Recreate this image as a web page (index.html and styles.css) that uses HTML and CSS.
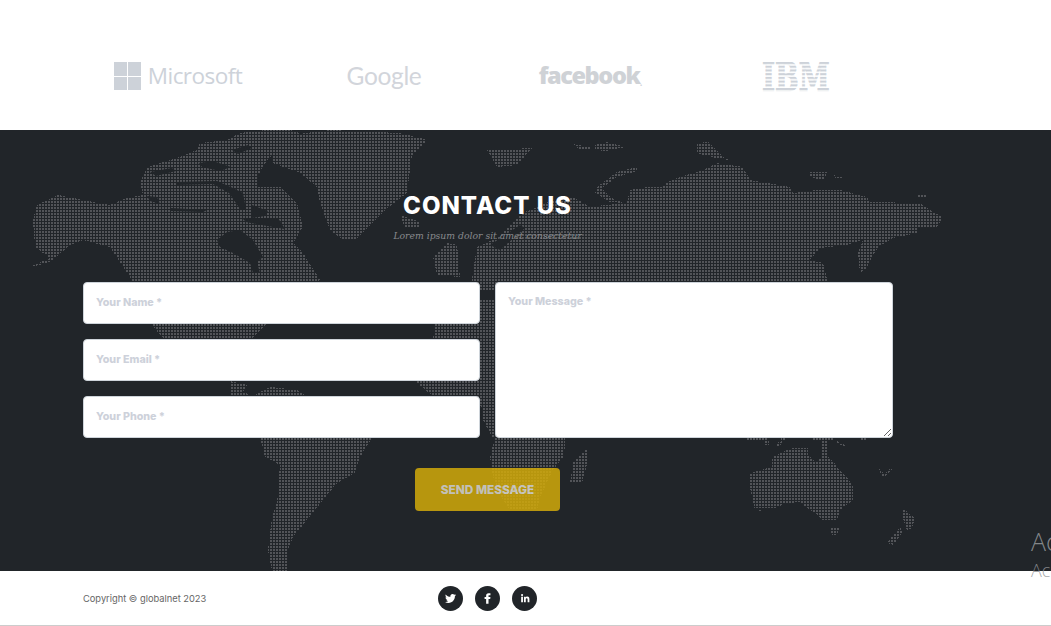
FILE: index.html
```html
<!DOCTYPE html>
<html lang="en">
<head>
<meta charset="utf-8">
<title>Contact</title>
<link rel="stylesheet" href="styles.css">
</head>
<body>
<section class="logos">
  <div class="logo logo-ms">
    <span class="ms-grid"><i></i><i></i><i></i><i></i></span>
    <span class="ms-word">Microsoft</span>
  </div>
  <div class="logo logo-google">Google</div>
  <div class="logo logo-fb">facebook<small>.</small></div>
  <div class="logo">
    <svg class="ibm" width="68" height="29" viewBox="0 0 68 29">
      <defs>
        <pattern id="stripes" patternUnits="userSpaceOnUse" width="68" height="3.72">
          <rect width="68" height="2.1" fill="#cdd2d9"/>
        </pattern>
      </defs>
      <text class="ibm-text" transform="scale(0.7 1)" x="0" y="29" fill="url(#stripes)" stroke="url(#stripes)">IBM</text>
    </svg>
  </div>
</section>

<section class="contact">
  <svg class="map" width="1051" height="441" viewBox="0 130 1051 441" aria-hidden="true">
    <defs>
      <pattern id="dots" patternUnits="userSpaceOnUse" width="3" height="3">
        <rect width="2" height="2" fill="#525458"/>
      </pattern>
    </defs>
    <g fill="url(#dots)" shape-rendering="crispEdges">
      <!-- North America -->
      <polygon points="28,268 50,258 35,247 33,220 37,205 58,195 83,200 110,205 127,198 143,195 140,183 147,167 177,158 197,150 200,143 227,140 240,133 267,130 290,130 300,133 267,160 257,177 258,187 280,187 297,203 303,227 293,243 303,253 320,280 270,320 253,338 163,338 152,325 133,282 130,277 110,247 83,240 70,245 50,262"/>
      <!-- Greenland -->
      <polygon points="273,148 290,135 330,130 400,133 428,140 412,155 410,170 407,193 385,210 355,240 343,240 330,230 320,203 317,187 300,173 273,163"/>
      <!-- Central America -->
      <polygon points="230,381 247,385 243,392 253,396 270,387 297,390 307,396 290,398 230,398"/>
      <!-- South America -->
      <polygon points="258,430 372,430 372,438 360,457 355,473 337,483 315,510 293,537 287,553 288,571 272,571 268,550 272,517 277,503 280,465 265,457"/>
      <!-- Iceland, Britain, Ireland -->
      <polygon points="487,150 532,148 517,165 497,167"/>
      <polygon points="400,215 420,222 420,228 405,228"/>
      <polygon points="433,257 447,243 457,245 460,277 437,275"/>
      <!-- Eurasia -->
      <polygon points="470,290 477,247 497,238 523,213 553,200 575,198 590,207 605,205 627,203 630,190 647,187 663,187 667,182 680,177 703,170 717,163 743,167 750,180 790,187 793,193 817,190 840,190 867,197 870,202 920,203 943,218 937,227 918,227 917,233 893,238 878,247 865,270 860,273 858,253 863,240 847,245 820,248 810,260 823,263 830,290"/>
      <!-- Arctic islands -->
      <polygon points="637,167 617,172 597,187 595,193 610,202 623,203 610,197 602,188 617,177 637,171"/>
      <polygon points="573,144 590,147 590,150 580,150"/>
      <polygon points="595,145 607,142 625,147 607,151 595,150"/>
      <polygon points="697,143 708,142 723,157 730,160 715,158 697,153"/>
      <polygon points="810,172 828,172 823,180 810,177"/>
      <polygon points="833,175 845,178 835,178"/>
      <polygon points="917,195 927,195 927,198 917,198"/>
      <!-- Africa -->
      <polygon points="440,300 560,300 565,448 563,457 553,470 540,497 537,510 510,510 503,500 493,477 490,457 495,438 492,437 483,420 483,407 433,396 417,383 420,370 433,338"/>
      <polygon points="587,448 573,463 570,483 582,483 588,460"/>
      <!-- Indonesia fragments -->
      <polygon points="746,437 767,437 767,440 746,440"/>
      <polygon points="765,441 769,441 769,445 765,445"/>
      <polygon points="775,444 782,441 782,444 778,446"/>
      <polygon points="781,437 786,437 786,440 781,440"/>
      <polygon points="813,437 834,437 834,440 813,440"/>
      <polygon points="821,440 827,440 827,450 821,450"/>
      <polygon points="835,440 845,445 845,446 838,444"/>
      <polygon points="860,437 866,437 866,440 860,440"/>
      <!-- Australia -->
      <polygon points="750,473 772,467 772,458 780,453 793,448 808,448 808,455 815,462 822,458 822,447 827,447 828,457 835,463 837,468 847,477 853,487 853,500 840,510 837,520 822,520 815,513 807,508 800,502 787,503 775,508 755,508 763,511 755,510 752,497 750,487"/>
      <polygon points="830,527 840,527 837,535 832,535"/>
      <!-- New Zealand and Pacific -->
      <polygon points="902,508 915,518 912,528 907,530 903,518"/>
      <polygon points="900,527 903,532 893,545 887,543"/>
      <polygon points="878,468 885,474 891,467 892,470 885,476 882,476"/>
    </g>
    <g class="water">
      <polygon points="217,240 227,232 240,230 253,240 263,257 257,262 260,273 253,273 250,263 233,253 220,247"/>
      <polygon points="252,205 268,211 265,216 252,218"/>
      <polygon points="243,219 278,218 285,229 267,226 246,222"/>
      <polygon points="170,208 207,210 203,212 170,211"/>
      <polygon points="175,182 217,181 233,188 243,193 246,209 240,209 229,193 213,184 177,185"/>
      <polygon points="199,163 213,161 231,167 220,171 202,167"/>
      <polygon points="147,196 157,197 160,204 150,201"/>
      <polygon points="150,172 172,168 176,171 156,176"/>
      <polygon points="232,150 248,145 252,148 238,154"/>
      <polygon points="490,245 520,225 525,228 500,250"/>
      <polygon points="463,250 470,250 470,282 463,282"/>
    </g>
  </svg>

  <div class="contact-inner">
    <h2 class="contact-title">CONTACT US</h2>
    <p class="contact-sub">Lorem ipsum dolor sit amet consectetur</p>
    <form class="contact-form">
      <input class="field" type="text" placeholder="Your Name *">
      <textarea class="field field-area" placeholder="Your Message *"></textarea>
      <input class="field" type="email" placeholder="Your Email *">
      <input class="field" type="tel" placeholder="Your Phone *">
    </form>
    <div class="actions">
      <button class="send" type="button">SEND MESSAGE</button>
    </div>
  </div>
</section>

<footer class="footer">
  <span class="copy">Copyright © globalnet 2023</span>
  <nav class="social">
    <a class="social-link" href="#"><svg viewBox="0 0 24 24" width="11" height="11"><path d="M23.95 4.57a10 10 0 01-2.82.77 4.96 4.96 0 002.16-2.72c-.95.55-2 .96-3.13 1.2a4.92 4.92 0 00-8.38 4.48C7.69 8.1 4.07 6.13 1.64 3.16a4.82 4.82 0 00-.67 2.48c0 1.71.87 3.21 2.19 4.1a4.9 4.9 0 01-2.23-.62v.06a4.92 4.92 0 003.95 4.83 4.9 4.9 0 01-2.21.08 4.94 4.94 0 004.6 3.42A9.87 9.87 0 010 19.54a14 14 0 007.56 2.21c9.05 0 14-7.5 14-13.98 0-.21 0-.42-.02-.63a9.94 9.94 0 002.46-2.55z"/></svg></a>
    <a class="social-link" href="#"><svg viewBox="0 0 24 24" width="11" height="11"><path d="M14.2 8.5V6.2c0-.9.6-1.2 1.1-1.2h3.1V.5h-4C10.4.5 9 3.2 9 5.9v2.6H5.6V13H9v10.5h5.2V13h3.7l.5-4.5z"/></svg></a>
    <a class="social-link" href="#"><svg viewBox="0 0 24 24" width="10" height="10"><path d="M4.98 2.5a2.5 2.5 0 11-.02 5 2.5 2.5 0 01.02-5zM2.8 9h4.3v13H2.8zM9.5 9h4v1.8h.05c.56-1 1.93-2.15 3.97-2.15 4.25 0 5.03 2.8 5.03 6.4V22h-4.3v-6.2c0-1.5-.03-3.4-2.05-3.4-2.06 0-2.37 1.6-2.37 3.3V22H9.5z"/></svg></a>
  </nav>
</footer>

<div class="watermark">
  <div class="wm-large">Ac</div>
  <div class="wm-small">Ac</div>
</div>
</body>
</html>
```

FILE: styles.css
```css
* { box-sizing: border-box; }
html, body { margin: 0; padding: 0; height: 626px; overflow: hidden; background: #fff; }
body { position: relative; font-family: Inter, "Liberation Sans", sans-serif; }

/* logos */
.logos {
  height: 130px;
  padding: 22px 0 0 75px;
  display: grid;
  grid-template-columns: repeat(4, 206px);
  align-items: center;
  justify-items: center;
  color: #cdd2d9;
}
.logo { display: flex; align-items: center; line-height: 1; }
.logo-ms { gap: 7px; }
.ms-grid {
  display: grid;
  grid-template-columns: 13px 13px;
  grid-auto-rows: 13.5px;
  gap: 1px;
}
.ms-grid i { display: block; background: #cdd2d9; }
.ms-word { font-family: "Open Sans", sans-serif; font-size: 22.5px; letter-spacing: -0.55px; }
.logo-google { font-family: Lato, sans-serif; font-size: 24.5px; color: #d2d5db; letter-spacing: -0.35px; }
.logo-fb { font-family: "Open Sans", sans-serif; font-weight: 800; font-size: 23.5px; letter-spacing: -1.4px; color: #cfd2d6; }
.logo-fb small { font-size: 12px; font-weight: 400; align-self: flex-end; }
.ibm { display: block; overflow: visible; }
.ibm-text { font-family: "DejaVu Serif", serif; font-weight: 700; font-size: 40px; stroke-width: 1.2px; }

/* contact */
.contact {
  position: relative;
  height: 441px;
  padding-top: 61px;
  background: #212529;
  overflow: hidden;
}
.map { position: absolute; left: 0; top: 0; display: block; }
.water polygon { fill: #212529; }
.contact-inner { position: relative; width: 810px; margin-left: 83px; }
.contact-title {
  margin: 0;
  padding-right: 1px;
  font-size: 24px;
  line-height: 30px;
  font-weight: 800;
  letter-spacing: 1px;
  color: #fff;
  text-align: center;
}
.contact-sub {
  margin: 8px 0 39px;
  padding-right: 1px;
  font-family: "DejaVu Serif", serif;
  font-style: italic;
  font-size: 9.25px;
  line-height: 14px;
  color: #888a8d;
  text-align: center;
}
.contact-form {
  display: grid;
  grid-template-columns: 397px 398px;
  grid-auto-rows: 42px;
  gap: 15px;
}
.field {
  display: block;
  width: 100%;
  height: 100%;
  padding: 11px 12px 13px;
  background: #fff;
  border: 1px solid #ced4da;
  border-radius: 4px;
  outline: 0;
  font-family: Inter, sans-serif;
  font-size: 10.7px;
  line-height: 16px;
  font-weight: 800;
}
.field::placeholder { color: #cdd1da; opacity: 1; }
.field-area { grid-column: 2; grid-row: 1 / span 3; }
.actions { display: flex; justify-content: center; margin-top: 30px; padding-right: 1px; }
.send {
  width: 145px;
  height: 43px;
  padding: 0;
  border: 0;
  border-radius: 4px;
  background: #d2aa0a;
  opacity: .85;
  color: #dedcd4;
  font-family: Inter, sans-serif;
  font-size: 11.8px;
  font-weight: 800;
}

/* footer */
.footer {
  height: 55px;
  padding: 0 0 0 83px;
  border-bottom: 1px solid #ccc;
  display: grid;
  grid-template-columns: 355px auto;
  align-items: center;
  background: #fff;
}
.copy { font-size: 9.3px; color: #666; }
.social { display: flex; gap: 12px; }
.social-link {
  width: 25px;
  height: 25px;
  border-radius: 50%;
  background: #212529;
  display: flex;
  align-items: center;
  justify-content: center;
}
.social-link svg { fill: #fff; display: block; }

/* watermark */
.watermark {
  position: absolute;
  left: 1031px;
  top: 525px;
  font-family: "Open Sans", sans-serif;
  font-weight: 300;
  white-space: nowrap;
  color: rgba(150, 152, 155, .85);
}
.wm-large { font-size: 25px; line-height: 33px; }
.wm-small { font-size: 18px; line-height: 24px; }
```
